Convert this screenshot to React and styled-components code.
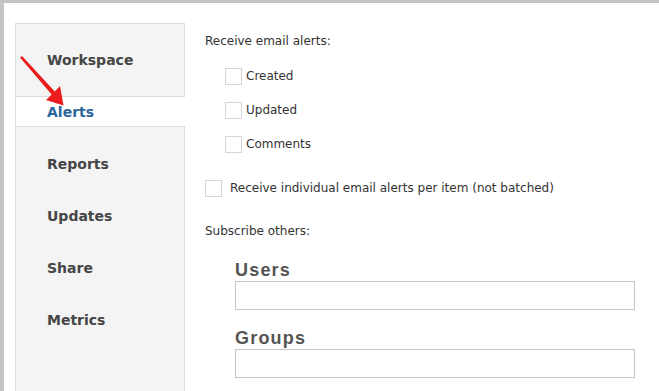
import styled, { createGlobalStyle } from "styled-components";

const GlobalStyle = createGlobalStyle`
  html, body {
    margin: 0;
    padding: 0;
    background: #c4c4c4;
    height: 100%;
    overflow: hidden;
  }
  body {
    font-family: "DejaVu Sans", Verdana, sans-serif;
  }
`;

const menu = ["Workspace", "Alerts", "Reports", "Updates", "Share", "Metrics"];
const alertTypes = ["Created", "Updated", "Comments"];

export default function App() {
  return (
    <>
      <GlobalStyle />
      <Page>
        <Sidebar>
          {menu.map((item) => (
            <MenuItem key={item} $active={item === "Alerts"}>
              {item}
            </MenuItem>
          ))}
        </Sidebar>

        <Content>
          <Heading>Receive email alerts:</Heading>
          <CheckList>
            {alertTypes.map((item) => (
              <CheckRow key={item}>
                <Box />
                <span>{item}</span>
              </CheckRow>
            ))}
          </CheckList>

          <CheckRow $wide>
            <Box />
            <span>Receive individual email alerts per item (not batched)</span>
          </CheckRow>

          <Heading $top={27}>Subscribe others:</Heading>
          <Fields>
            <FieldLabel>Users</FieldLabel>
            <TextInput />
            <FieldLabel $top={18}>Groups</FieldLabel>
            <TextInput />
          </Fields>
        </Content>

        <Arrow width="80" height="120" viewBox="0 0 80 120">
          <path
            d="M20 57.5 L22 56 L54.8 91.6 L60 86 L63.5 105.5 L46 100 L51.6 94.6 Z"
            fill="#ec1c1c"
          />
        </Arrow>
      </Page>
    </>
  );
}

const Page = styled.div`
  position: relative;
  margin: 3px 0 0 4px;
  height: 388px;
  overflow: hidden;
  background: #fff;
  display: flex;
  align-items: flex-start;
`;

const Sidebar = styled.div`
  box-sizing: border-box;
  margin: 20px 0 0 11px;
  width: 170px;
  height: 368px;
  padding-top: 20px;
  background: #f4f4f4;
  border: 1px solid #dddddd;
  border-bottom: none;
  display: flex;
  flex-direction: column;
  gap: 21px;
`;

const MenuItem = styled.div`
  height: 31px;
  box-sizing: border-box;
  padding-left: 31px;
  display: flex;
  align-items: center;
  font-size: 14px;
  font-weight: bold;
  color: ${(p) => (p.$active ? "#2c659c" : "#454545")};
  background: ${(p) => (p.$active ? "#fff" : "transparent")};
  border-top: 1px solid ${(p) => (p.$active ? "#dddddd" : "transparent")};
  border-bottom: 1px solid ${(p) => (p.$active ? "#dddddd" : "transparent")};
  margin-right: ${(p) => (p.$active ? "-1px" : "0")};
`;

const Content = styled.div`
  margin-left: 20px;
  padding-top: 31px;
  display: flex;
  flex-direction: column;
  font-size: 12px;
  color: #333;
`;

const Heading = styled.div`
  line-height: 15px;
  margin-top: ${(p) => (p.$top || 0)}px;
`;

const CheckList = styled.div`
  margin: 19px 0 27px 20px;
  display: flex;
  flex-direction: column;
  gap: 17px;
`;

const CheckRow = styled.label`
  display: flex;
  align-items: center;
  gap: ${(p) => (p.$wide ? "8px" : "4px")};
  line-height: 17px;
`;

const Box = styled.span`
  width: 15px;
  height: 15px;
  border: 1px solid #d6d6d6;
  background: #fff;
  flex-shrink: 0;
`;

const Fields = styled.div`
  margin: 21px 0 0 30px;
  display: flex;
  flex-direction: column;
`;

const FieldLabel = styled.div`
  font-family: "Liberation Sans", Arial, sans-serif;
  font-size: 18px;
  font-weight: bold;
  letter-spacing: 1.2px;
  line-height: 20px;
  color: #555;
  margin-top: ${(p) => (p.$top || 0)}px;
  margin-bottom: 1px;
`;

const TextInput = styled.div`
  width: 398px;
  height: 27px;
  border: 1px solid #c6c6c6;
  background: #fff;
`;

const Arrow = styled.svg`
  position: absolute;
  left: -4px;
  top: -3px;
  pointer-events: none;
`;
